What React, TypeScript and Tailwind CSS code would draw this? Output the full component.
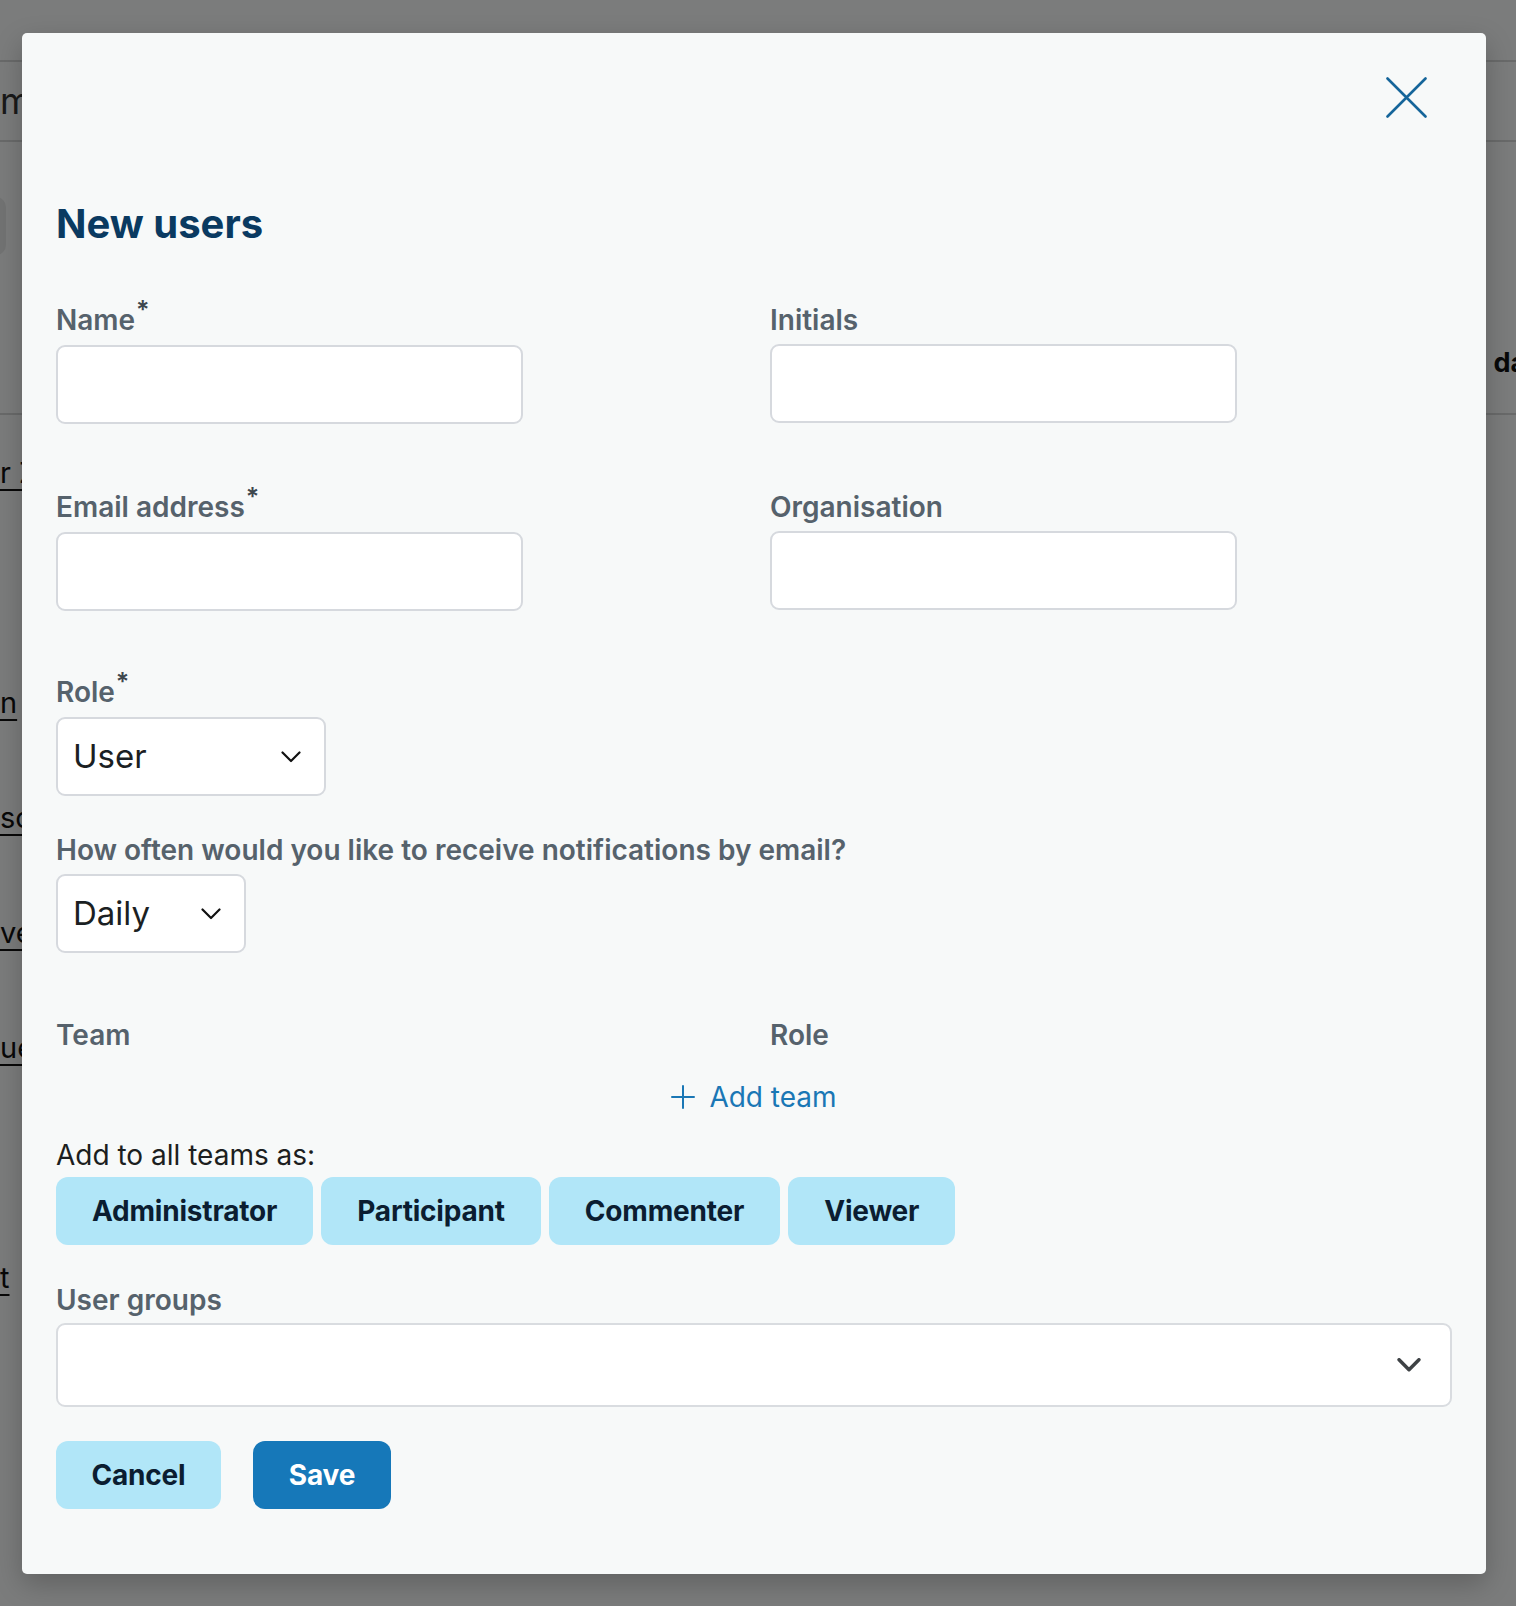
import React from 'react';

const rows = ['r Zhang', '', 'n', 'son', 've', 'ue', '', 't'];

function Chevron({ className = '' }: { className?: string }) {
    return (
        <svg viewBox="0 0 20 12" className={className} fill="none" stroke="currentColor" strokeWidth={2.2} strokeLinecap="round" strokeLinejoin="round">
            <path d="M1.5 1.5 L10 10 L18.5 1.5" />
        </svg>
    );
}

function FieldLabel({ children, required }: { children: React.ReactNode; required?: boolean }) {
    return (
        <div className="text-[28px] leading-[32px] font-semibold text-[#56626c]">
            {children}
            {required && <span className="relative -top-[11px] ml-[1px] text-[25px] text-[#3e474e]">*</span>}
        </div>
    );
}

function TextInput() {
    return <input type="text" className="mt-[8px] block h-[79px] w-[467px] rounded-[9px] border-2 border-[#d6d9de] bg-white px-4 text-[28px] outline-none" />;
}

function SelectBox({ value, width }: { value: string; width: string }) {
    return (
        <div className={`mt-[8px] flex h-[79px] items-center justify-between rounded-[9px] border-2 border-[#d6d9de] bg-white pl-[15px] pr-[23px] ${width}`}>
            <span className="text-[33px] text-[#1b1f23]">{value}</span>
            <Chevron className="h-[12px] w-[20px] text-[#111]" />
        </div>
    );
}

function RoleButton({ label }: { label: string }) {
    return (
        <button className="h-[68px] rounded-[12px] bg-[#b1e6f8] px-[36px] text-[28px] font-bold tracking-[-0.2px] text-[#0b1d31]">
            {label}
        </button>
    );
}

export default function App() {
    return (
        <div className="relative h-[1606px] w-[1516px] overflow-hidden bg-[#f6f8f8] font-['Inter',sans-serif]">
            {/* Page behind the dialog */}
            <div className="h-[62px] border-b-2 border-[#d2d4d4]" />
            <div className="flex h-[80px] items-center border-b-2 border-[#d2d4d4] text-[36px] text-[#333]">mmary</div>
            <div className="pt-[55px]">
                <div className="ml-[-60px] h-[58px] w-[66px] rounded-[10px] bg-[#e4e6e6]" />
            </div>
            <div className="mt-[101px] flex h-[59px] items-end justify-end border-b-2 border-[#d2d4d4] pb-[30px]">
                <span className="mr-[-36px] text-[27px] font-bold text-[#111]">date</span>
            </div>
            <div>
                {rows.map((r, i) => (
                    <div key={i} className="flex h-[115px] items-center">
                        <span className="text-[29px] text-[#111] underline underline-offset-[6px]">{r}</span>
                    </div>
                ))}
            </div>

            {/* Backdrop */}
            <div className="absolute inset-0 bg-black/50 pl-[22px] pt-[33px]">
                <div className="w-[1464px] rounded-[5px] bg-[#f7f9f9] px-[34px] pt-[44px] pb-[65px] shadow-[0_10px_28px_rgba(0,0,0,0.22)]">
                    <div className="flex justify-end">
                        <button className="mr-[25px] h-[41px] w-[41px] text-[#15659a]">
                            <svg viewBox="0 0 41 41" className="h-[41px] w-[41px]" fill="none" stroke="currentColor" strokeWidth={2.6} strokeLinecap="round">
                                <path d="M1.5 1.5 L39.5 39.5 M39.5 1.5 L1.5 39.5" />
                            </svg>
                        </button>
                    </div>

                    <h2 className="mt-[82px] text-[40px] leading-[48px] font-bold text-[#0a3a61]">New users</h2>

                    <div className="mt-[56px] grid grid-cols-2 gap-x-[32px] gap-y-[67px]">
                        <div>
                            <FieldLabel required>Name</FieldLabel>
                            <TextInput />
                        </div>
                        <div>
                            <FieldLabel>Initials</FieldLabel>
                            <TextInput />
                        </div>
                        <div>
                            <FieldLabel required>Email address</FieldLabel>
                            <TextInput />
                        </div>
                        <div>
                            <FieldLabel>Organisation</FieldLabel>
                            <TextInput />
                        </div>
                    </div>

                    <div className="mt-[65px]">
                        <FieldLabel required>Role</FieldLabel>
                        <SelectBox value="User" width="w-[270px]" />
                    </div>

                    <div className="mt-[38px]">
                        <FieldLabel>How often would you like to receive notifications by email?</FieldLabel>
                        <SelectBox value="Daily" width="w-[190px]" />
                    </div>

                    <div className="mt-[66px] grid grid-cols-2 gap-x-[32px]">
                        <FieldLabel>Team</FieldLabel>
                        <FieldLabel>Role</FieldLabel>
                    </div>

                    <div className="mt-[29px] flex justify-center">
                        <button className="flex items-center gap-[14px] text-[28px] leading-[34px] text-[#1a77b5]">
                            <svg viewBox="0 0 24 24" className="h-[24px] w-[24px]" fill="none" stroke="currentColor" strokeWidth={2} strokeLinecap="round">
                                <path d="M12 1 V23 M1 12 H23" />
                            </svg>
                            Add team
                        </button>
                    </div>

                    <div className="mt-[25px] text-[28px] leading-[32px] text-[#1c1e20]">Add to all teams as:</div>
                    <div className="mt-[6px] flex gap-[8px]">
                        <RoleButton label="Administrator" />
                        <RoleButton label="Participant" />
                        <RoleButton label="Commenter" />
                        <RoleButton label="Viewer" />
                    </div>

                    <div className="mt-[39px]">
                        <FieldLabel>User groups</FieldLabel>
                        <div className="mt-[7px] flex h-[84px] items-center justify-end rounded-[9px] border-2 border-[#d9dce0] bg-white pr-[29px]">
                            <Chevron className="h-[14px] w-[24px] text-[#3e4245] [&_path]:stroke-[3]" />
                        </div>
                    </div>

                    <div className="mt-[34px] flex gap-[32px]">
                        <button className="h-[68px] w-[165px] rounded-[12px] bg-[#b1e6f8] text-[28px] font-bold tracking-[-0.2px] text-[#0b1d31]">Cancel</button>
                        <button className="h-[68px] w-[138px] rounded-[12px] bg-[#1678b9] text-[28px] font-bold tracking-[-0.2px] text-white">Save</button>
                    </div>
                </div>
            </div>
        </div>
    );
}
